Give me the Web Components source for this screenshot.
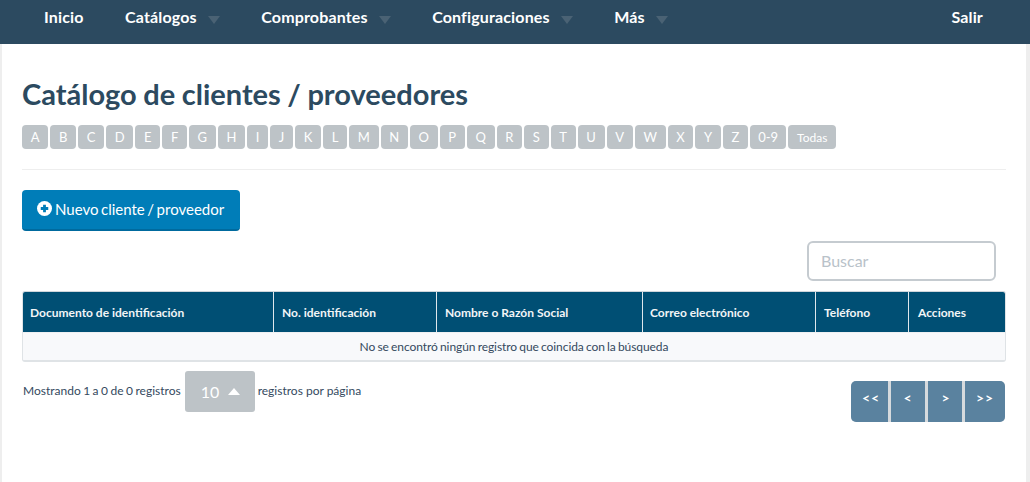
<!DOCTYPE html>
<html lang="es">
<head>
<meta charset="utf-8">
<title>Catálogo de clientes / proveedores</title>
<style>
    html, body { margin: 0; height: 100%; background: #fff; overflow: hidden; }
    body { font-family: Lato, "Open Sans", sans-serif; color: #34495e; }
</style>
</head>
<body>
<barra-menu></barra-menu>
<pagina-catalogo></pagina-catalogo>

<script>
// Barra superior de navegacion
class BarraMenu extends HTMLElement {
    constructor() {
        super();
        this.attachShadow({ mode: 'open' });
        const items = [['Inicio', 0], ['Catálogos', 1], ['Comprobantes', 1], ['Configuraciones', 1], ['Más', 1]];
        this.shadowRoot.innerHTML = `
            <style>
                :host { display: flex; height: 44px; background: #2c4a60; color: #fff; font-size: 16px; font-weight: 700; letter-spacing: 0.15px; padding: 0 47px 0 44px; box-sizing: border-box; }
                nav { display: flex; flex: 1; gap: 41.5px; }
                .item { display: flex; align-items: center; height: 33px; }
                .flecha { width: 0; height: 0; margin-left: 11px; margin-top: 6px; border: 6px solid transparent; border-bottom: 0; border-top: 8px solid #4a6274; }
                .salir { height: 33px; display: flex; align-items: center; }
            </style>
            <nav>
                ${items.map(([t, f]) => `<span class="item">${t}${f ? '<i class="flecha"></i>' : ''}</span>`).join('')}
            </nav>
            <span class="salir">Salir</span>
        `;
    }
}
customElements.define('barra-menu', BarraMenu);

// Fila de letras para filtrar
class FiltroLetras extends HTMLElement {
    constructor() {
        super();
        this.attachShadow({ mode: 'open' });
        const letras = 'ABCDEFGHIJKLMNOPQRSTUVWXYZ'.split('');
        this.shadowRoot.innerHTML = `
            <style>
                :host { display: flex; gap: 2px; height: 24px; }
                span { display: flex; align-items: center; padding: 0 8.7px; background: #bdc3c7; color: #fff; border-radius: 4px; font-size: 13px; }
                .num { padding: 0 8px; }
                .todas { font-size: 12px; padding: 0 9px; }
            </style>
            ${letras.map(l => `<span>${l}</span>`).join('')}
            <span class="num">0-9</span>
            <span class="todas">Todas</span>
        `;
    }
}
customElements.define('filtro-letras', FiltroLetras);

// Boton azul con icono de mas
class BotonNuevo extends HTMLElement {
    constructor() {
        super();
        this.attachShadow({ mode: 'open' });
        this.shadowRoot.innerHTML = `
            <style>
                :host { display: inline-flex; align-items: center; gap: 3px; width: 218px; height: 41px; box-sizing: border-box; padding: 0 0 2px 15px; background: #007db8; border-bottom: 2px solid #006a9e; border-radius: 4px; color: #fff; font-size: 15px; word-spacing: -1.3px; }
                svg { width: 15px; height: 15px; flex: none; }
            </style>
            <svg viewBox="0 0 16 16"><circle cx="8" cy="8" r="8" fill="#fff"/><path d="M8 4v8M4 8h8" stroke="#007db8" stroke-width="3"/></svg>
            <slot></slot>
        `;
    }
}
customElements.define('boton-nuevo', BotonNuevo);

// Tabla vacia de registros
class TablaRegistros extends HTMLElement {
    constructor() {
        super();
        this.attachShadow({ mode: 'open' });
        const columnas = [['Documento de identificación', 251], ['No. identificación', 163], ['Nombre o Razón Social', 206], ['Correo electrónico', 173], ['Teléfono', 93], ['Acciones', 98]];
        this.shadowRoot.innerHTML = `
            <style>
                :host { display: block; height: 71px; box-sizing: border-box; border: 1px solid #dfe3e6; border-top-color: #cfd6db; border-bottom-width: 2px; border-radius: 3px; overflow: hidden; }
                .cabecera { display: flex; height: 40px; background: #004f74; color: #f2f5f7; font-size: 12px; font-weight: 700; }
                .cabecera span { display: flex; align-items: center; box-sizing: border-box; padding-left: 8px; border-right: 1px solid #dfe7ec; }
                .cabecera span:first-child { padding-left: 7px; }
                .cabecera span:nth-child(4) { padding-left: 7px; }
                .cabecera span:last-child { border-right: 0; padding-left: 9px; flex: 1; }
                .vacio { display: flex; align-items: center; justify-content: center; height: 28px; background: #f8f9fb; border-top: 1px solid #eef0f2; box-sizing: border-box; font-size: 12px; color: #34495e; word-spacing: -0.8px; letter-spacing: -0.07px; }
            </style>
            <div class="cabecera">
                ${columnas.map(([t, a]) => `<span style="width:${a}px">${t}</span>`).join('')}
            </div>
            <div class="vacio"><slot></slot></div>
        `;
    }
}
customElements.define('tabla-registros', TablaRegistros);

// Selector de registros por pagina y texto de totales
class InfoRegistros extends HTMLElement {
    constructor() {
        super();
        this.attachShadow({ mode: 'open' });
        this.shadowRoot.innerHTML = `
            <style>
                :host { display: flex; align-items: flex-start; font-size: 12px; color: #34495e; padding-left: 1px; }
                .txt { line-height: 40px; }
                .txt.uno { word-spacing: -0.6px; }
                .selector { display: flex; align-items: center; width: 70px; height: 41px; box-sizing: border-box; padding: 0 15px 0 16px; margin: 0 3px 0 4px; background: #bdc3c7; border-radius: 3px; color: #fff; font-size: 16px; justify-content: space-between; }
                .selector i { width: 0; height: 0; border: 6px solid transparent; border-top: 0; border-bottom: 7px solid #fff; }
            </style>
            <span class="txt uno">Mostrando 1 a 0 de 0 registros</span>
            <span class="selector">10<i></i></span>
            <span class="txt">registros por página</span>
        `;
    }
}
customElements.define('info-registros', InfoRegistros);

// Botones de paginacion
class BotonesPagina extends HTMLElement {
    constructor() {
        super();
        this.attachShadow({ mode: 'open' });
        this.shadowRoot.innerHTML = `
            <style>
                :host { display: flex; width: 154px; height: 41px; border-radius: 5px; overflow: hidden; gap: 3px; background: #d6dadd; color: #fff; font-size: 14px; font-weight: 700; }
                span { display: flex; align-items: center; justify-content: center; background: #5a829f; padding-bottom: 8px; box-sizing: border-box; letter-spacing: 1px; }
                .a { width: 37px; padding-left: 3px; }
                .b { width: 34px; }
                .c { width: 34px; padding-left: 2px; }
                .d { flex: 1; }
            </style>
            <span class="a">&lt;&lt;</span><span class="b">&lt;</span><span class="c">&gt;</span><span class="d">&gt;&gt;</span>
        `;
    }
}
customElements.define('botones-pagina', BotonesPagina);

// Contenido completo de la pagina
class PaginaCatalogo extends HTMLElement {
    constructor() {
        super();
        this.attachShadow({ mode: 'open' });
        this.shadowRoot.innerHTML = `
            <style>
                :host { display: block; height: 438px; box-sizing: border-box; padding: 31px 20px 0 20px; border-left: 2px solid #eee; border-right: 4px solid #eee; }
                h1 { margin: 0; font-size: 29px; line-height: 38px; font-weight: 700; color: #2c4a60; word-spacing: -0.5px; }
                filtro-letras { margin-top: 12px; }
                hr { border: 0; border-top: 1px solid #eee; margin: 20px 0; }
                .buscar { display: flex; justify-content: flex-end; margin: 10px 10px 10px 0; }
                .caja { width: 189px; height: 40px; box-sizing: border-box; border: 2px solid #c5cbd0; border-radius: 6px; padding: 0 0 2px 12px; display: flex; align-items: center; font-size: 16px; color: #b9c2c9; }
                .pie { display: flex; justify-content: space-between; margin-top: 9px; }
                botones-pagina { margin-right: 1px; margin-top: 10px; }
            </style>
            <h1>Catálogo de clientes / proveedores</h1>
            <filtro-letras></filtro-letras>
            <hr>
            <boton-nuevo>Nuevo cliente / proveedor</boton-nuevo>
            <div class="buscar"><div class="caja">Buscar</div></div>
            <tabla-registros>No se encontró ningún registro que coincida con la búsqueda</tabla-registros>
            <div class="pie">
                <info-registros></info-registros>
                <botones-pagina></botones-pagina>
            </div>
        `;
    }
}
customElements.define('pagina-catalogo', PaginaCatalogo);
</script>
</body>
</html>
